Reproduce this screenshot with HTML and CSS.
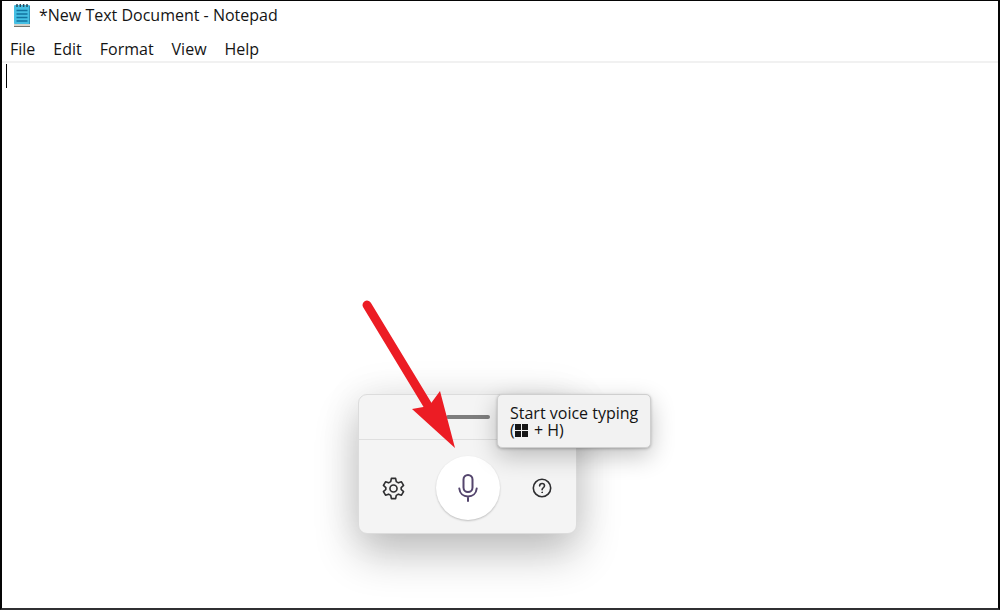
FILE: index.html
```
<!DOCTYPE html>
<html lang="en">
<head>
<meta charset="utf-8">
<meta name="viewport" content="width=device-width, initial-scale=1">
<title>*New Text Document - Notepad</title>
<link rel="stylesheet" href="styles.css">
</head>
<body>
<div class="window">
  <header class="titlebar">
    <svg class="app-icon" viewBox="0 0 18 24" aria-hidden="true">
      <rect x="1" y="20" width="16" height="3" fill="#d5d3cb"/>
      <path d="M1 23.500h16" stroke="#77736b"/>
      <rect x="1" y="2" width="16" height="19" rx="1" fill="#45bfe3"/>
      <path d="M16.500 3v18" stroke="#2c8fb5"/>
      <path d="M3.500 7.500h11M3.500 11h11M3.500 14.500h11M3.500 18h11" stroke="#1273a0" stroke-width="1.600"/>
      <path d="M4 1v3M7.300 1v3M10.600 1v3M14 1v3" stroke="#28495c" stroke-width="1.500"/>
    </svg>
    <h1 class="title">*New Text Document - Notepad</h1>
  </header>
  <nav class="menubar">
    <button class="menu-item" type="button">File</button>
    <button class="menu-item" type="button">Edit</button>
    <button class="menu-item" type="button">Format</button>
    <button class="menu-item" type="button">View</button>
    <button class="menu-item" type="button">Help</button>
  </nav>
  <main class="editor">
    <textarea class="text" aria-label="Document text"></textarea>
    <span class="caret"></span>
  </main>
</div>

<section class="voice-panel" aria-label="Voice typing">
  <div class="grip"><span class="grip-bar"></span></div>
  <div class="controls">
    <button class="icon-button" type="button" aria-label="Settings">
      <svg class="icon" viewBox="0 0 24 24" fill="none" stroke="#2e2e30" stroke-width="1.700" stroke-linejoin="round">
        <path d="M9.800 1.500h4.400l.7 3.300 2.200 1.300 3.200-1.100 2.200 3.800-2.500 2.200v2l2.500 2.200-2.200 3.800-3.200-1.100-2.200 1.300-.7 3.300H9.800l-.7-3.300-2.200-1.300L3.700 19l-2.200-3.800L4 13v-2L1.500 8.800 3.700 5l3.200 1.100 2.200-1.300z"/>
        <circle cx="12" cy="12" r="3.700"/>
      </svg>
    </button>
    <button class="mic-button" type="button" aria-label="Start voice typing" aria-describedby="mic-tip">
      <svg class="mic" viewBox="0 0 20 28" fill="none" stroke="#54456d" stroke-width="2" stroke-linecap="round">
        <rect x="5.500" y="1" width="9" height="17" rx="4.500"/>
        <path d="M1.300 14.500c.5 5 4 7.900 8.700 7.900s8.200-2.900 8.700-7.900M10 22.500V27"/>
      </svg>
    </button>
    <button class="icon-button" type="button" aria-label="Help">
      <svg class="icon help" viewBox="0 0 20 20" fill="none" stroke="#2e2e30" stroke-width="1.600" stroke-linecap="round">
        <circle cx="10" cy="10" r="8.700"/>
        <path d="M7.600 7.900c.1-1.500 1.100-2.400 2.500-2.400s2.400.9 2.400 2.200c0 1.900-2.400 2.200-2.400 4"/>
        <circle cx="10.100" cy="14.300" r=".4" fill="#2e2e30" stroke-width="1"/>
      </svg>
    </button>
  </div>
  <div class="tooltip" id="mic-tip" role="tooltip">
    Start voice typing<br>
    (<svg class="win-key" viewBox="0 0 13 13" role="img" aria-label="Windows key"><path d="M0 0h6v6H0zM7 0h6v6H7zM0 7h6v6H0zM7 7h6v6H7z" fill="#161616"/></svg> + H)
  </div>
  <svg class="arrow" viewBox="0 0 100 152" aria-hidden="true">
    <path d="M9 9l63 104" stroke="#ec1c24" stroke-width="9" stroke-linecap="round"/>
    <path d="M97 152L54 113l17-3 11-15z" fill="#ec1c24"/>
  </svg>
</section>
</body>
</html>
```
FILE: styles.css
```
* {
  box-sizing: border-box;
}

body {
  margin: 0;
  background: #fff;
  color: #141414;
  font-family: "Open Sans", "Noto Sans", sans-serif;
  font-size: 16px;
}

button {
  border: 0;
  padding: 0;
  background: none;
  color: inherit;
  font: inherit;
}

.window {
  display: flex;
  flex-direction: column;
  height: calc(100vh - 1px);
  border: 2px solid #050505;
  border-top-width: 1px;
  border-bottom-color: #303032;
}

.titlebar {
  display: flex;
  align-items: center;
  gap: 8px;
  height: 27px;
  padding-left: 11px;
}

.app-icon {
  width: 18px;
  height: 24px;
}

.title {
  margin: 0;
  font-size: 16px;
  font-weight: 400;
  line-height: 24px;
}

.menubar {
  display: flex;
  gap: 18px;
  padding: 9px 8px 0;
  border-bottom: 2px solid #f1f1f1;
}

.menu-item {
  line-height: 24px;
}

.editor {
  position: relative;
  display: flex;
  flex: 1;
}

.text {
  flex: 1;
  border: 0;
  padding: 2px 6px;
  outline: 0;
  background: transparent;
  color: inherit;
  font: inherit;
  resize: none;
}

.caret {
  position: absolute;
  top: 1px;
  left: 4px;
  width: 1px;
  height: 24px;
  background: #000;
}

.voice-panel {
  position: absolute;
  top: 394px;
  left: 358px;
  width: 219px;
  border: 1px solid #dcdcdc;
  border-radius: 9px;
  background: #f4f4f4;
  box-shadow: 0 20px 44px rgba(0, 0, 0, 0.24), 0 0 40px rgba(0, 0, 0, 0.08);
}

.grip {
  display: flex;
  align-items: center;
  justify-content: center;
  height: 45px;
  border-bottom: 1px solid #dfdfdf;
}

.grip-bar {
  width: 44px;
  height: 4px;
  border-radius: 2px;
  background: #7d7d7d;
}

.controls {
  display: flex;
  align-items: center;
  justify-content: space-between;
  padding: 16px 22px 13px;
}

.icon-button {
  display: flex;
  align-items: center;
  justify-content: center;
  width: 24px;
  height: 24px;
}

.icon {
  width: 23px;
  height: 23px;
}

.help {
  width: 20px;
  height: 20px;
}

.mic-button {
  display: flex;
  align-items: center;
  justify-content: center;
  width: 64px;
  height: 64px;
  border-radius: 50%;
  background: #fff;
  box-shadow: 0 1px 2px rgba(0, 0, 0, 0.22);
}

.mic {
  width: 20px;
  height: 28px;
}

.tooltip {
  position: absolute;
  top: -1px;
  left: 138px;
  padding: 10px 12px 8px;
  border: 1px solid #cfcfcf;
  border-radius: 5px;
  background: #f2f2f2;
  box-shadow: 0 8px 24px rgba(0, 0, 0, 0.24), 0 1px 3px rgba(0, 0, 0, 0.24);
  font-size: 16px;
  line-height: 17px;
  white-space: nowrap;
}

.win-key {
  width: 13px;
  height: 13px;
  margin-right: 2px;
  vertical-align: -1px;
}

.arrow {
  position: absolute;
  top: -99px;
  left: -1px;
  width: 100px;
  height: 152px;
}
```
